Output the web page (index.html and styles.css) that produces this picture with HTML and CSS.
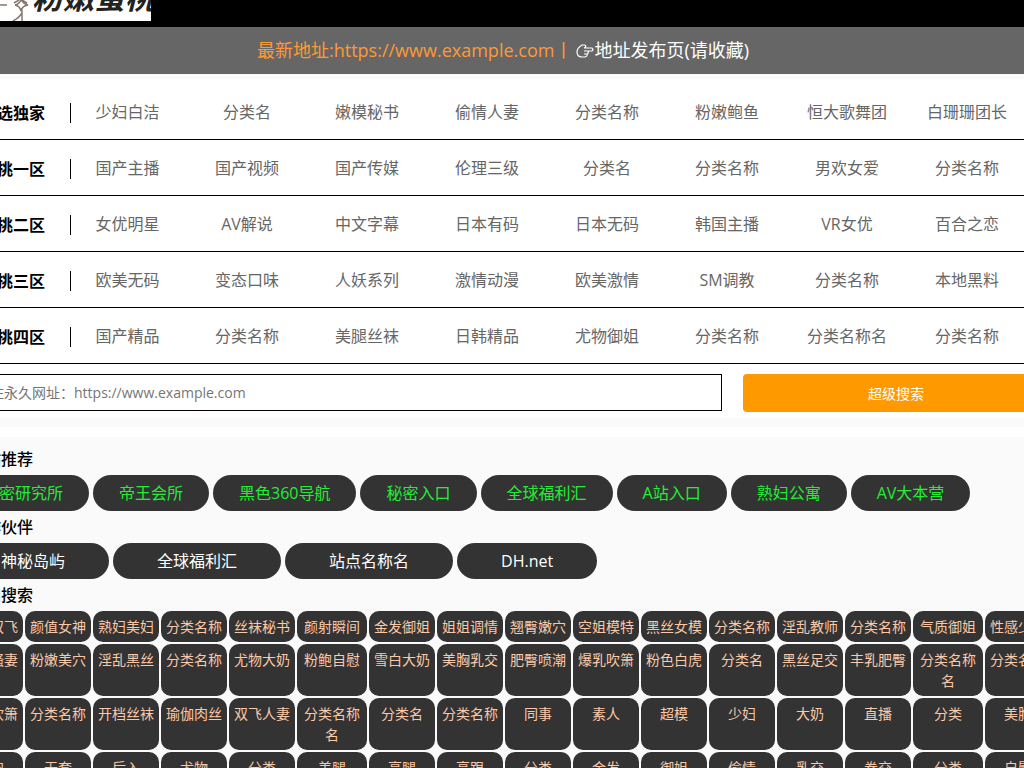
FILE: index.html
```html
<!DOCTYPE html>
<html lang="zh-CN">
<head>
    <meta charset="UTF-8">
    <title>导航</title>
    <link rel="stylesheet" href="styles.css">
</head>
<body>
    <div class="page">
        <header class="header">
            <div class="container">
                <a class="logo" href="#">
                    <svg width="248" height="21" viewBox="0 0 248 21">
                        <g fill="none" stroke="#86776d" stroke-width="1.5">
                            <path d="M97 5h7M111 3l5-3M124 3l-5-3M112 5q5-1 6-6q2 5 7 6q-6 1-7 6q-1-5-6-6"/>
                            <path d="M119 10v11M119 13q-3 5-9 8"/>
                        </g>
                        <text class="logo-text" x="129" y="9">粉嫩蜜桃</text>
                    </svg>
                </a>
            </div>
        </header>

        <div class="notice">
            <div class="container notice-text">
                <span class="address">最新地址:https://www.example.com丨</span>
                <a href="#"><svg width="18" height="16" viewBox="0 0 18 16"><path d="M9 2H6Q1 5 1 9q0 5 5 5h3q3-1 2-3q2-1 1-3h4q2-1 0-3H8q3-1 1-3M12 8H8M11 11H8" fill="none" stroke="#fff" stroke-width="1.2"/></svg>地址发布页(请收藏)</a>
            </div>
        </div>

        <div class="top">
            <div class="container">
                <nav>
                    <div class="nav-row"><b>精选独家</b><a href="#">少妇白洁</a><a href="#">分类名</a><a href="#">嫩模秘书</a><a href="#">偷情人妻</a><a href="#">分类名称</a><a href="#">粉嫩鲍鱼</a><a href="#">恒大歌舞团</a><a href="#">白珊珊团长</a></div>
                    <div class="nav-row"><b>精挑一区</b><a href="#">国产主播</a><a href="#">国产视频</a><a href="#">国产传媒</a><a href="#">伦理三级</a><a href="#">分类名</a><a href="#">分类名称</a><a href="#">男欢女爱</a><a href="#">分类名称</a></div>
                    <div class="nav-row"><b>精挑二区</b><a href="#">女优明星</a><a href="#">AV解说</a><a href="#">中文字幕</a><a href="#">日本有码</a><a href="#">日本无码</a><a href="#">韩国主播</a><a href="#">VR女优</a><a href="#">百合之恋</a></div>
                    <div class="nav-row"><b>精挑三区</b><a href="#">欧美无码</a><a href="#">变态口味</a><a href="#">人妖系列</a><a href="#">激情动漫</a><a href="#">欧美激情</a><a href="#">SM调教</a><a href="#">分类名称</a><a href="#">本地黑料</a></div>
                    <div class="nav-row"><b>精挑四区</b><a href="#">国产精品</a><a href="#">分类名称</a><a href="#">美腿丝袜</a><a href="#">日韩精品</a><a href="#">尤物御姐</a><a href="#">分类名称</a><a href="#">分类名称名</a><a href="#">分类名称</a></div>
                </nav>
                <form class="search">
                    <input type="text" aria-label="搜索" placeholder="请记住永久网址：https://www.example.com">
                    <button type="button">超级搜索</button>
                </form>
            </div>
        </div>

        <div class="spacer"></div>

        <main class="container content">
            <h2>本站推荐</h2>
            <div class="pills green">
                <a href="#">秘密研究所</a><a href="#">帝王会所</a><a href="#">黑色360导航</a><a href="#">秘密入口</a><a href="#">全球福利汇</a><a href="#">A站入口</a><a href="#">熟妇公寓</a><a href="#">AV大本营</a>
            </div>
            <h2>合作伙伴</h2>
            <div class="pills partner">
                <a href="#">神秘岛屿</a><a href="#">全球福利汇</a><a href="#">站点名称名</a><a href="#">DH.net</a>
            </div>
            <h2>热门搜索</h2>
            <div class="tags">
                <a href="#">分类双飞</a><a href="#">颜值女神</a><a href="#">熟妇美妇</a><a href="#">分类名称</a><a href="#">丝袜秘书</a><a href="#">颜射瞬间</a><a href="#">金发御姐</a><a href="#">姐姐调情</a><a href="#">翘臀嫩穴</a><a href="#">空姐模特</a><a href="#">黑丝女模</a><a href="#">分类名称</a><a href="#">淫乱教师</a><a href="#">分类名称</a><a href="#">气质御姐</a><a href="#">性感少妇</a>

                <a href="#">风骚骚妻</a><a href="#">粉嫩美穴</a><a href="#">淫乱黑丝</a><a href="#">分类名称</a><a href="#">尤物大奶</a><a href="#">粉鲍自慰</a><a href="#">雪白大奶</a><a href="#">美胸乳交</a><a href="#">肥臀喷潮</a><a href="#">爆乳吹箫</a><a href="#">粉色白虎</a><a href="#">分类名</a><a href="#">黑丝足交</a><a href="#">丰乳肥臀</a><a href="#">分类名称名</a><a href="#">分类名称</a>

                <a href="#">美女吹箫</a><a href="#">分类名称</a><a href="#">开档丝袜</a><a href="#">瑜伽肉丝</a><a href="#">双飞人妻</a><a href="#">分类名称名</a><a href="#">分类名</a><a href="#">分类名称</a><a href="#">同事</a><a href="#">素人</a><a href="#">超模</a><a href="#">少妇</a><a href="#">大奶</a><a href="#">直播</a><a href="#">分类</a><a href="#">美胸</a>

                <a href="#">巨肉</a><a href="#">无套</a><a href="#">后入</a><a href="#">尤物</a><a href="#">分类</a><a href="#">美腿</a><a href="#">高腿</a><a href="#">高跟</a><a href="#">分类</a><a href="#">金发</a><a href="#">御姐</a><a href="#">偷情</a><a href="#">乳交</a><a href="#">拳交</a><a href="#">分类</a><a href="#">自慰</a>
            </div>
        </main>
    </div>
</body>
</html>
```
FILE: styles.css
```css
* {
    box-sizing: border-box;
}
body {
    margin: 0;
    background: #fafafa;
    font-family: "Open Sans", "Noto Sans CJK SC", sans-serif;
    font-size: 16px;
    color: #000;
}
a {
    color: inherit;
    text-decoration: none;
}
.page {
    height: 100vh;
    overflow: hidden;
}
.container {
    width: 1200px;
    margin-left: -97px;
}
.header {
    background: #000;
    padding-bottom: 6px;
}
.logo {
    display: block;
    width: 248px;
    height: 21px;
    background: #fff;
    overflow: hidden;
}
.logo svg {
    display: block;
}
.logo-text {
    font-family: "Noto Sans CJK SC", sans-serif;
    font-size: 31px;
    font-style: italic;
    font-weight: bold;
    fill: #222;
}
.notice {
    background: #666;
    color: #fff;
    font-size: 18px;
    line-height: 47px;
    margin-bottom: 5px;
}
.notice-text {
    display: flex;
    justify-content: center;
    gap: 4px;
    height: 47px;
}
.address {
    color: #f93;
}
.notice svg {
    vertical-align: -2px;
}
.top {
    background: #fff;
    padding: 5px 0 6px;
}
.nav-row {
    display: flex;
    align-items: center;
    height: 56px;
    padding-top: 2px;
    border-bottom: 1px solid #000;
    color: #666;
    line-height: 20px;
}
.nav-row b {
    width: 168px;
    padding-right: 25px;
    border-right: 1px solid #000;
    text-align: right;
    color: #000;
}
.nav-row a {
    width: 120px;
    padding-bottom: 2px;
    text-align: center;
}
.nav-row b + a {
    width: 116px;
    padding-right: 3px;
}
.search {
    display: flex;
    gap: 21px;
    padding: 10px 54px 0;
}
.search input {
    width: 765px;
    height: 37px;
    padding: 0 4px;
    border: 1px solid #000;
    font: inherit;
    font-size: 14px;
}
.search input::placeholder {
    color: #757575;
}
.search button {
    flex: 1;
    height: 38px;
    border: 0;
    border-radius: 4px;
    background: #f90;
    color: #fff;
    font: inherit;
    font-size: 14px;
}
.spacer {
    height: 10px;
    margin: 9px 0 0;
    background: #fff;
}
.content {
    padding-left: 54px;
}
h2 {
    margin: 0;
    padding-left: 12px;
    font-size: 16px;
    font-weight: 500;
    line-height: 32px;
}
.content h2:first-child {
    padding-top: 6px;
}
.pills {
    display: flex;
    gap: 4px;
}
.pills a {
    padding: 0 26px;
    border-radius: 18px;
    background: #333;
    color: #fff;
    line-height: 36px;
}
.green a {
    color: #2e3;
}
.partner a {
    padding: 0 44px;
}
.tags {
    display: grid;
    grid-template-columns: repeat(5, 66px) 70px repeat(8, 66px) 70px 66px;
    gap: 2px;
}
.tags a {
    padding: 5px 4px;
    border-radius: 10px;
    background: #333;
    color: #fcc9a8;
    font-size: 14px;
    line-height: 21px;
    text-align: center;
}
```
